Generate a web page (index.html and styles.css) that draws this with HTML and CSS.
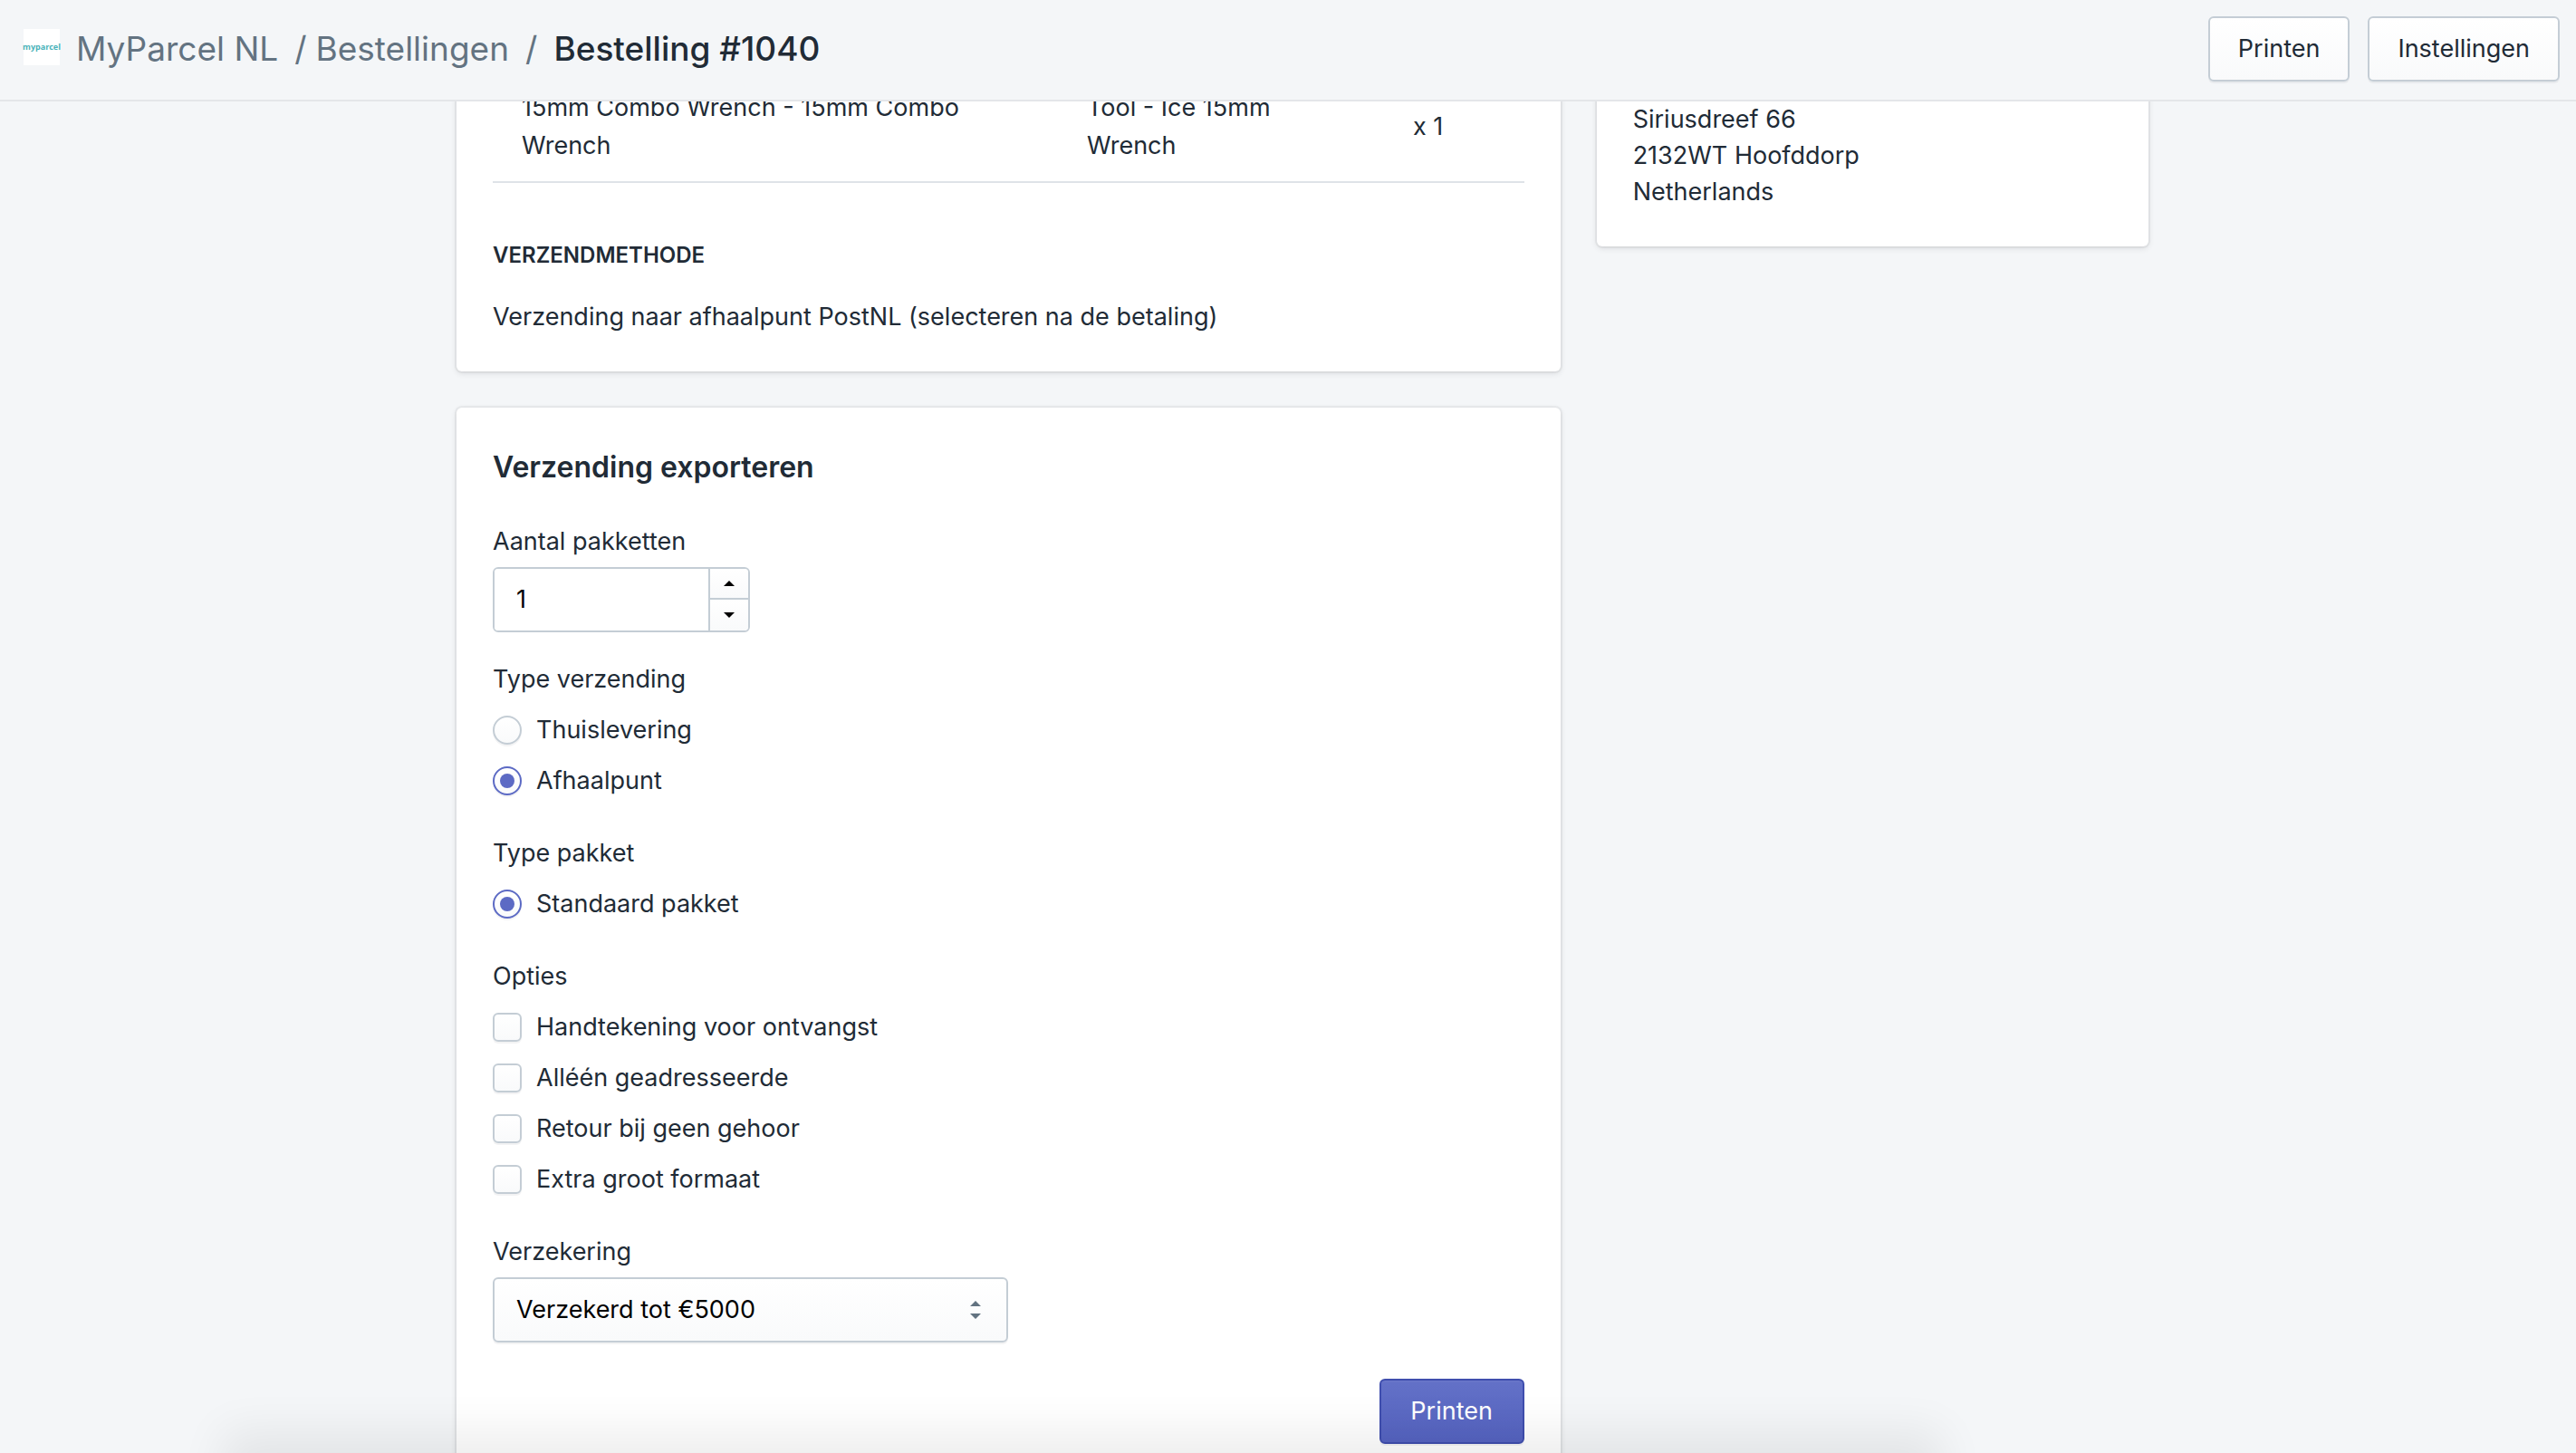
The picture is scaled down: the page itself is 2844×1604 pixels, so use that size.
FILE: index.html
```html
<!DOCTYPE html>
<html lang="nl">
<head>
<meta charset="utf-8">
<meta name="viewport" content="width=device-width, initial-scale=1">
<title>Bestelling #1040</title>
<link rel="stylesheet" href="styles.css">
</head>
<body>
<header class="topbar">
  <nav class="crumbs" aria-label="Kruimelpad">
    <span class="logo" aria-hidden="true">myparcel</span>
    <a class="crumb crumb-app" href="#app">MyParcel NL</a>
    <span class="slash">/</span>
    <a class="crumb crumb-parent" href="#bestellingen">Bestellingen</a>
    <span class="slash">/</span>
    <h1 class="crumb-current">Bestelling #1040</h1>
  </nav>
  <div class="actions">
    <button class="btn" type="button">Printen</button>
    <button class="btn" type="button">Instellingen</button>
  </div>
</header>

<main class="page">
  <div class="column">
    <section class="card">
      <table class="products">
        <colgroup><col class="col-product"><col class="col-variant"><col></colgroup>
        <tbody>
          <tr>
            <td>15mm Combo Wrench - 15mm Combo Wrench</td>
            <td>Tool - Ice 15mm Wrench</td>
            <td>x 1</td>
          </tr>
        </tbody>
      </table>
      <h3 class="subheading">Verzendmethode</h3>
      <p class="text">Verzending naar afhaalpunt PostNL (selecteren na de betaling)</p>
    </section>

    <section class="card">
      <h2 class="card-title">Verzending exporteren</h2>
      <form class="form">
        <div class="field">
          <label class="label" for="amount">Aantal pakketten</label>
          <div class="stepper">
            <input class="stepper-input" id="amount" type="number" value="1">
            <div class="stepper-buttons">
              <button class="step" type="button" aria-label="Meer"><svg width="12" height="6" viewBox="0 0 12 6"><path d="M0 6 6 0l6 6z"/></svg></button>
              <button class="step" type="button" aria-label="Minder"><svg width="12" height="6" viewBox="0 0 12 6"><path d="M0 0h12L6 6z"/></svg></button>
            </div>
          </div>
        </div>

        <fieldset class="group">
          <legend class="label">Type verzending</legend>
          <label class="choice"><input class="radio" type="radio" name="delivery">Thuislevering</label>
          <label class="choice"><input class="radio" type="radio" name="delivery" checked>Afhaalpunt</label>
        </fieldset>

        <fieldset class="group">
          <legend class="label">Type pakket</legend>
          <label class="choice"><input class="radio" type="radio" name="package" checked>Standaard pakket</label>
        </fieldset>

        <fieldset class="group">
          <legend class="label">Opties</legend>
          <label class="choice"><input class="checkbox" type="checkbox">Handtekening voor ontvangst</label>
          <label class="choice"><input class="checkbox" type="checkbox">Alléén geadresseerde</label>
          <label class="choice"><input class="checkbox" type="checkbox">Retour bij geen gehoor</label>
          <label class="choice"><input class="checkbox" type="checkbox">Extra groot formaat</label>
        </fieldset>

        <div class="field">
          <label class="label" for="insurance">Verzekering</label>
          <div class="select-wrap">
            <select class="select" id="insurance"><option>Verzekerd tot €5000</option></select>
            <svg class="select-icon" width="12" height="20" viewBox="0 0 12 20"><path d="M0 6 6 0l6 6zM0 14h12l-6 6z"/></svg>
          </div>
        </div>
      </form>
      <div class="card-footer">
        <button class="btn btn-primary" type="button">Printen</button>
      </div>
    </section>
  </div>

  <aside class="column">
    <section class="card card-address">
      <address class="address">Siriusdreef 66<br>2132WT Hoofddorp<br>Netherlands</address>
    </section>
  </aside>
</main>
<div class="bottom-shadow"></div>
</body>
</html>
```
FILE: styles.css
```css
* { box-sizing: border-box; }

html, body { height: 100%; }

body {
  margin: 0;
  overflow: hidden;
  background: #f4f6f8;
  color: #212b36;
  font-family: Inter, "Liberation Sans", sans-serif;
  font-size: 27px;
  line-height: 40px;
}

h1, h2, h3, p { margin: 0; }

button, input, select { font: inherit; color: inherit; }

/* Top bar */
.topbar {
  position: fixed;
  top: 0;
  left: 0;
  right: 0;
  z-index: 2;
  display: flex;
  align-items: center;
  justify-content: space-between;
  height: 112px;
  padding: 0 18px 2px 26px;
  background: #f4f6f8;
  border-bottom: 2px solid #e4e6e9;
}

.crumbs {
  display: flex;
  align-items: center;
  font-size: 37px;
  line-height: 56px;
  color: #637381;
}

.logo {
  display: flex;
  align-items: center;
  justify-content: center;
  width: 40px;
  height: 40px;
  margin: 0 18px 4px 0;
  background: #fff;
  color: #4bb3ba;
  font: bold 9px/12px "Open Sans", sans-serif;
}

.crumb { color: inherit; text-decoration: none; }
.crumb-app { margin-right: 18px; }
.crumb-parent { margin: 0 18px 0 10px; }
.crumb-current {
  margin-left: 18px;
  font-size: inherit;
  font-weight: 500;
  color: #212b36;
}

.actions { display: flex; gap: 20px; }

.btn {
  height: 72px;
  padding: 0 31px;
  border: 2px solid #c4cdd5;
  border-radius: 6px;
  background: linear-gradient(#fff, #f9fafb);
  box-shadow: 0 2px 0 rgba(22, 29, 37, 0.05);
}

.btn-primary {
  min-width: 160px;
  border-color: #3f4eae;
  background: linear-gradient(#6371c7, #5563c1);
  box-shadow: inset 0 2px 0 #6774c8, 0 2px 0 rgba(22, 29, 37, 0.05);
  color: #fff;
}

/* Page layout */
.page {
  display: grid;
  grid-template-columns: minmax(0, 2fr) minmax(0, 1fr);
  gap: 40px;
  align-items: start;
  max-width: 1900px;
  margin: 0 auto;
  padding: 32px 0 0 32px;
}

.column { display: grid; gap: 40px; }

.card {
  padding: 40px;
  background: #fff;
  border-radius: 6px;
  box-shadow: 0 0 0 2px rgba(63, 63, 68, 0.05), 0 2px 6px rgba(63, 63, 68, 0.15);
}

.card-address {
  display: flex;
  align-items: flex-end;
  min-height: 240px;
}

.address { font-style: normal; }

.products {
  width: 100%;
  table-layout: fixed;
  border-collapse: collapse;
  line-height: 42px;
}

.products td {
  padding: 26px 32px 18px;
  border-bottom: 2px solid #dfe3e8;
  vertical-align: middle;
}

.col-product { width: 624px; }
.col-variant { width: 360px; }

.subheading {
  margin: 64px 0 32px;
  font-size: 24px;
  line-height: 32px;
  font-weight: 600;
  text-transform: uppercase;
}

.card-title {
  padding-top: 2px;
  margin-bottom: 38px;
  font-size: 32px;
  line-height: 48px;
  font-weight: 600;
}

/* Form */
.form { display: grid; gap: 32px; }

.label { display: block; padding: 0; margin-bottom: 8px; }

.group { min-width: 0; margin: 0; padding: 0; border: 0; }

.choice {
  display: flex;
  align-items: center;
  gap: 16px;
  padding: 8px 0;
}

.radio, .checkbox {
  appearance: none;
  flex: none;
  display: grid;
  place-items: center;
  width: 32px;
  height: 32px;
  margin: 0;
  border: 2px solid #c4cdd5;
  background: linear-gradient(#fff, #f9fafb);
  box-shadow: 0 2px 0 rgba(22, 29, 37, 0.05);
}

.checkbox { border-radius: 6px; }
.radio { border-radius: 50%; }
.radio:checked { border-color: #5c6ac4; }
.radio:checked::before {
  content: "";
  width: 16px;
  height: 16px;
  border-radius: 50%;
  background: #5c6ac4;
}

.stepper {
  display: flex;
  width: 284px;
  height: 72px;
  border: 2px solid #c4cdd5;
  border-radius: 6px;
  overflow: hidden;
}

.stepper-input {
  flex: 1;
  min-width: 0;
  padding: 0 24px;
  border: 0;
  background: #fff;
  color: #000;
  appearance: textfield;
}

.stepper-input::-webkit-inner-spin-button { appearance: none; margin: 0; }

.stepper-buttons {
  display: grid;
  grid-template-rows: 32px 36px;
  width: 44px;
  border-left: 2px solid #c4cdd5;
}

.step {
  display: grid;
  place-items: center;
  padding: 0;
  border: 0;
  background: linear-gradient(#fff, #f9fafb);
}

.step + .step { border-top: 2px solid #c4cdd5; }

.select-wrap { position: relative; width: 50%; }

.select {
  appearance: none;
  display: block;
  width: 100%;
  height: 72px;
  padding: 0 72px 0 24px;
  border: 2px solid #c4cdd5;
  border-radius: 6px;
  background: linear-gradient(#fff, #f9fafb);
  box-shadow: 0 2px 0 rgba(22, 29, 37, 0.05);
  color: #000;
}

.select-icon {
  position: absolute;
  top: 26px;
  right: 30px;
  fill: #637381;
  pointer-events: none;
}

.card-footer {
  display: flex;
  justify-content: flex-end;
  margin-top: 40px;
}

/* Soft shade rising from below the window's lower edge */
.bottom-shadow {
  position: fixed;
  top: 100%;
  left: 246px;
  right: 700px;
  height: 100px;
  box-shadow: 0 -24px 50px rgba(0, 0, 0, 0.07);
  pointer-events: none;
}
```
